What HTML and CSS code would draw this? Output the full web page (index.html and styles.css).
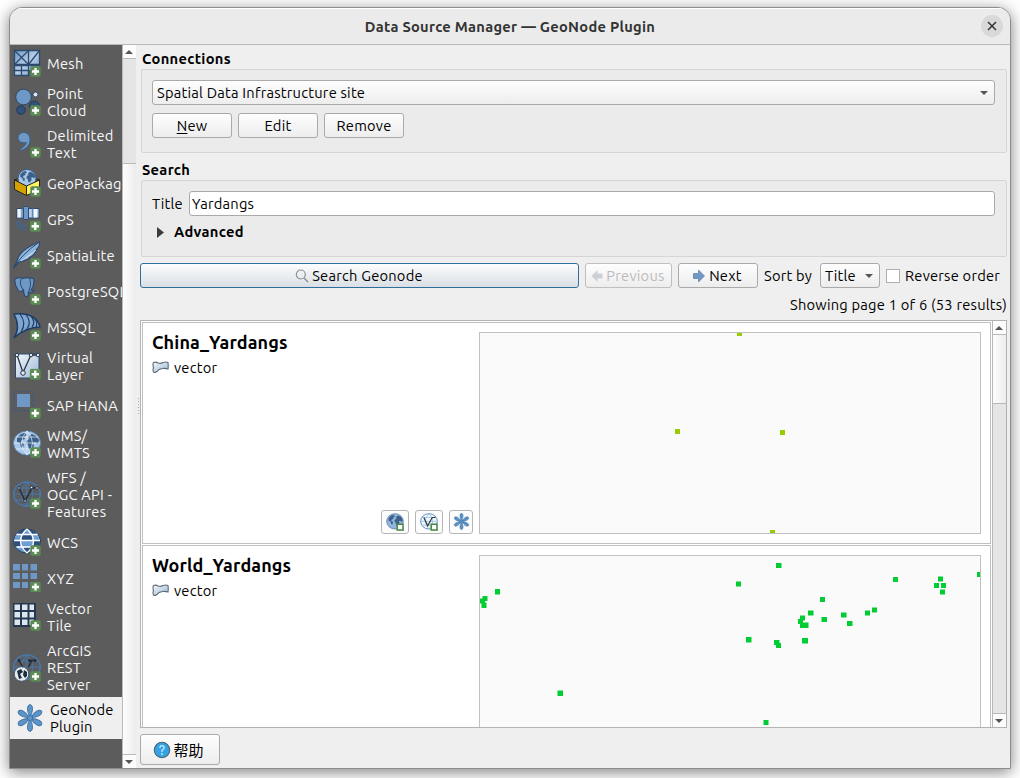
FILE: index.html
```
<!DOCTYPE html>
<html lang="en">
<head>
<meta charset="utf-8">
<title>Data Source Manager — GeoNode Plugin</title>
<link rel="stylesheet" href="styles.css">
</head>
<body>
<svg class="defs" width="0" height="0">
  <defs>
    <linearGradient id="pale" x1="0" y1="0" x2="1" y2="1"><stop offset="0" stop-color="#f4f6f9"/><stop offset="1" stop-color="#9db8d6"/></linearGradient>
    <linearGradient id="steel" x1="0" y1="0" x2="1" y2="1"><stop offset="0" stop-color="#6d97c4"/><stop offset=".5" stop-color="#b7cde6"/><stop offset="1" stop-color="#6d97c4"/></linearGradient>
    <symbol id="plus" viewBox="0 0 11 11"><rect x=".3" y=".3" width="10.4" height="10.4" rx="1.8" fill="#5a8c54"/><path d="M5.5 2v7M2 5.5h7" stroke="#fff" stroke-width="2.3"/></symbol>
    <symbol id="land" viewBox="0 0 28 28"><path d="M4 8l4-4 4-1 2 2-3 2 1 2-3 1-1 2 3 2-1 4-2-1-1-4-3-1zM16 6l3-2 4 2 3 4-1 4-3-2-2 1 1 3-3 4-2-1-1-4-2-2 1-3 3-1-2-1z" fill="#3c608a"/></symbol>
    <symbol id="flower" viewBox="0 0 28 28"><g fill="#5d94c8" stroke="#3c71a3" stroke-width=".9"><g id="pair"><path d="M14 13C10.500 7 10.700 1 14 .6 17.300 1 17.500 7 14 13zM14 15C10.500 21 10.700 27 14 27.400 17.300 27 17.500 21 14 15z"/></g><use href="#pair" transform="rotate(60 14 14)"/><use href="#pair" transform="rotate(120 14 14)"/><circle cx="14" cy="14" r="2.700"/></g></symbol>
    <symbol id="polygon" viewBox="0 0 18 14"><path d="M1.500 1.500Q4 .5 6 2Q9 3 11 1.500Q14 .5 16 1.500Q16.500 5 16 8Q13 7 10.500 7.500Q6.500 8 5 10.500Q3 12 1.500 11Q.5 9 1.500 7Q.5 3 1.500 1.500z" fill="url(#pale)" stroke="#5f6b78" stroke-width="1.100"/></symbol>
  </defs>
</svg>

<div class="window">
  <header class="titlebar">
    <h1 class="title">Data Source Manager — GeoNode Plugin</h1>
    <button class="close" aria-label="Close"><svg width="10" height="10" viewBox="0 0 10 10"><path d="M1 1l8 8M9 1L1 9" stroke="#333" stroke-width="1.500"/></svg></button>
  </header>

  <div class="body">
    <nav class="sources">
      <a class="source"><svg class="icon" viewBox="0 0 28 28"><g fill="url(#steel)" stroke="#2c4a70" stroke-width="1.300"><path d="M1.500 1.500h14v14h-14zM15.500 1.500h11v14h-11zM1.500 16.500h14v10h-14z"/><path d="M1.500 1.500l14 14M15.500 1.500l-14 14M26.500 1.500l-11 14M1.500 21.500h14M8.500 16.500v10" fill="none"/></g><path d="M15.500 16.500h11v5h-11z" fill="#7fa4cd" stroke="#2c4a70"/><use href="#plus" x="17" y="17" width="11" height="11"/></svg><span>Mesh</span></a>
      <a class="source"><svg class="icon" viewBox="0 0 28 28"><circle cx="10.500" cy="9" r="7.800" fill="#6f98c6" stroke="#2c4a70"/><circle cx="22.500" cy="6.500" r="2.500" fill="#dbe7f3" stroke="#2c4a70"/><circle cx="8" cy="22" r="4.300" fill="#31517b" stroke="#223b5c"/><circle cx="21.500" cy="18" r="5" fill="#31517b" stroke="#223b5c"/><use href="#plus" x="17" y="17" width="11" height="11"/></svg><span>Point<br>Cloud</span></a>
      <a class="source"><svg class="icon" viewBox="0 0 28 28"><path d="M10.500 2.500C14.500 2.500 17 5.500 17 9.500C17 15 13.500 19 7.500 20.500L7 19C10.500 17.500 13 15 13.300 12.500C9 13.500 5 11.500 5 7.800C5 4.800 7.500 2.500 10.500 2.500z" fill="#6f98c6" stroke="#35618f"/><use href="#plus" x="17" y="17" width="11" height="11"/></svg><span>Delimited<br>Text</span></a>
      <a class="source"><svg class="icon" viewBox="0 0 28 28"><path d="M1.500 11l12-5 13 5-13 6z" fill="#6b5300" stroke="#222"/><circle cx="14" cy="9.500" r="9" fill="#a9c8e8" stroke="#35618f"/><use href="#land" x="4" y="0" width="20" height="19"/><path d="M1.500 11l12 6v9.500l-12-6z" fill="#d4a300" stroke="#222"/><path d="M26.500 11l-13 6v9.500l13-6z" fill="#fff35e" stroke="#222"/><use href="#plus" x="17" y="17" width="11" height="11"/></svg><span>GeoPackage</span></a>
      <a class="source"><svg class="icon" viewBox="0 0 28 28"><path d="M4 3.500h22v9.500H4z" fill="#b9d0e8" stroke="#2c4a70"/><path d="M6 4v8.500M22.500 4v8.500" stroke="#f4f8fc" stroke-width="3"/><path d="M9 3.500v9.500M19.500 3.500v9.500" stroke="#5b87b5" stroke-width="1.300"/><rect x="10.500" y="1.500" width="5" height="13" rx="1" fill="#6f98c6" stroke="#2c4a70"/><path d="M3 15.500a9.500 9.500 0 0 0 10 9M6.500 15.500a6 6 0 0 0 7 5.500" fill="none" stroke="#3e6694" stroke-width="1.700"/><use href="#plus" x="16.500" y="15.500" width="11.500" height="11.500"/></svg><span>GPS</span></a>
      <a class="source"><svg class="icon" viewBox="0 0 28 28"><path d="M.5 27L4 20Q6 9 26.500 1Q27 6 23 9Q22 14 17 16Q13 20 6 21z" fill="#8db4da" stroke="#2c4a70" stroke-width="1.200"/><path d="M.5 27Q9 13 25 2" fill="none" stroke="#2c4a70"/><path d="M8 20l11-8M13 18l10-9" fill="none" stroke="#c5daee"/><use href="#plus" x="17" y="17" width="11" height="11"/></svg><span>SpatiaLite</span></a>
      <a class="source"><svg class="icon" viewBox="0 0 28 28"><path d="M2 2Q6-.5 10 1.500Q14 0 17 1.200Q21 .5 21 4Q21 9 18 13L21 13.500Q19.500 16 15.500 15L15 19Q12 21 11 17L10.500 13Q7 16 5 13Q1 7 2 2z" fill="#6f98c6" stroke="#2c4a70" stroke-width="1.200"/><path d="M8 2Q6 8 10.500 13M17 2Q19 8 15.500 15" fill="none" stroke="#2c4a70"/><use href="#plus" x="17" y="17" width="11" height="11"/></svg><span>PostgreSQL</span></a>
      <a class="source"><svg class="icon" viewBox="0 0 28 28"><path d="M1 1Q23-1 27 14Q13 14 1 25Q8 14 1 1z" fill="#7fa7d1" stroke="#1f3d63" stroke-width="1.400"/><path d="M7 1Q14 10 8 19M13 1.500Q19 9 14 16M18 3Q23 9 19 14M22 6Q25 10 23 14" fill="none" stroke="#1f3d63" stroke-width="1.200"/><use href="#plus" x="17" y="17" width="11" height="11"/></svg><span>MSSQL</span></a>
      <a class="source"><svg class="icon" viewBox="0 0 28 28"><path d="M2.500 2h23.500v24H2.500z" fill="url(#pale)" stroke="#2c4a70"/><path d="M4 3l6 17.500L18 3h6" fill="none" stroke="#26384d" stroke-width="1.300"/><g fill="#dfe8f1" stroke="#26384d"><circle cx="4" cy="3" r="1.800"/><circle cx="18" cy="3" r="1.800"/><circle cx="25" cy="3" r="1.800"/><circle cx="10" cy="21" r="2.300"/></g><use href="#plus" x="16.500" y="16.500" width="11.500" height="11.500"/></svg><span>Virtual<br>Layer</span></a>
      <a class="source"><svg class="icon" viewBox="0 0 28 28"><rect x="1" y=".5" width="19" height="19" fill="none" stroke="#3c5a80" stroke-width="1.500" stroke-dasharray="2.500 2"/><rect x="4" y="3" width="13" height="13" fill="#6f98c6"/><use href="#plus" x="16.500" y="16.500" width="11.500" height="11.500"/></svg><span>SAP HANA</span></a>
      <a class="source"><svg class="icon" viewBox="0 0 28 28"><ellipse cx="14" cy="13" rx="13.500" ry="12" fill="#a9c8e8" stroke="#5b87b5"/><use href="#land"/><path d="M14 1v24M1 13h26M3 7h22M3 19h22M14 1Q3 13 14 25M14 1Q25 13 14 25" fill="none" stroke="#eef5fb" stroke-width=".9" opacity=".75"/><use href="#plus" x="17" y="17" width="11" height="11"/></svg><span>WMS/<br>WMTS</span></a>
      <a class="source"><svg class="icon" viewBox="0 0 28 28"><path d="M14 1v24M1 13h26M3 7h22M3 19h22M14 1Q2 13 14 25M14 1Q26 13 14 25" fill="none" stroke="#4878ae"/><ellipse cx="14" cy="13" rx="13.300" ry="12" fill="none" stroke="#4878ae" stroke-width="1.500"/><path d="M6 7l6 13 7-13h5" fill="none" stroke="#222d3a" stroke-width="1.500"/><g fill="#fff" stroke="#222d3a"><circle cx="6" cy="7" r="1.300"/><circle cx="12" cy="20" r="1.300"/><circle cx="18.500" cy="6.500" r="1.300"/><circle cx="24" cy="7" r="1.300"/></g><use href="#plus" x="17" y="17" width="11" height="11"/></svg><span>WFS /<br>OGC API -<br>Features</span></a>
      <a class="source"><svg class="icon" viewBox="0 0 28 28"><ellipse cx="14" cy="13" rx="13.500" ry="12" fill="#6f9fd0" stroke="#1f3d63"/><path d="M4 6.500h4.500L12 1.500Q7 2 4 6.500zM24 6.500h-4.500L16 1.500Q21 2 24 6.500zM9 7h10v5.500H9zM1 13h6v5.500H2.500Q1 16 1 13zM27 13h-6v5.500h4.500Q27 16 27 13zM9 19.500h10L14 25z" fill="#2c4f7c"/><path d="M1 12.500h26M3.500 6.500h21M3.500 19h21M14 1Q1 13 14 25M14 1Q27 13 14 25" fill="none" stroke="#fff" stroke-width="1.300"/><use href="#plus" x="17" y="17" width="11" height="11"/></svg><span>WCS</span></a>
      <a class="source"><svg class="icon" viewBox="0 0 28 28"><path d="M0 0h7v6.500H0zM9 0h6v6.500H9zM17.500 0h6.500v6.500h-6.500zM0 9h7v6H0zM9 9h6v6H9zM17.500 9h6.500v6h-6.500zM0 18h7v6H0zM9 18h6v6H9zM17.500 18h6.500v6h-6.500z" fill="#6f98c6"/><use href="#plus" x="17" y="17.500" width="11" height="11"/></svg><span>XYZ</span></a>
      <a class="source"><svg class="icon" viewBox="0 0 28 28"><rect width="23" height="24" fill="#25384f"/><path d="M1.500 1.500H7V7H1.500zM9 1.500h5.500V7H9zM16.500 1.500H21V7h-4.500zM1.500 9H7v5.500H1.500zM9 9h5.500v5.500H9zM16.500 9H21v5.500h-4.500zM1.500 16.500H7V22H1.500zM9 16.500h5.500V22H9zM16.500 16.500H21V22h-4.500z" fill="#dbe6f1"/><use href="#plus" x="17" y="17" width="11" height="11"/></svg><span>Vector<br>Tile</span></a>
      <a class="source"><svg class="icon" viewBox="0 0 28 28"><path d="M14 1v24M1 13h26M3 7h22M3 19h22M14 1Q2 13 14 25M14 1Q26 13 14 25" fill="none" stroke="#4878ae"/><ellipse cx="14" cy="13" rx="13.300" ry="12" fill="none" stroke="#4878ae" stroke-width="1.500"/><path d="M6 6.500l4 7M19 6.500l-4 7M16 6.500h7" fill="none" stroke="#222d3a" stroke-width="1.500"/><g fill="#222d3a"><circle cx="6" cy="6.500" r="1.500"/><circle cx="16.500" cy="6.500" r="1.500"/><circle cx="22" cy="6.500" r="1.500"/></g><circle cx="8.500" cy="20" r="7.300" fill="#e6ebf0" stroke="#46566a"/><path d="M4 17l4-2 2 3-3 2 2 4-3 1zM11 16l3 2v4l-2 2-2-3z" fill="#1d2c3d"/><use href="#plus" x="17" y="17" width="11" height="11"/></svg><span>ArcGIS<br>REST<br>Server</span></a>
      <a class="source selected"><svg class="icon"><use href="#flower"/></svg><span>GeoNode<br>Plugin</span></a>
    </nav>

    <div class="scroll side-scroll"><i class="btn-end"><b class="up"></b></i><i class="track"></i><i class="handle"></i><i class="btn-end"><b class="down"></b></i></div>
    <div class="splitter"><i></i></div>

    <main class="main">
      <h2 class="heading">Connections</h2>
      <section class="group connections">
        <div class="box combo"><span>Spatial Data Infrastructure site</span><b class="down"></b></div>
        <div class="row">
          <button class="box button"><span><u>N</u>ew</span></button>
          <button class="box button"><span>Edit</span></button>
          <button class="box button"><span>Remove</span></button>
        </div>
      </section>

      <h2 class="heading search-heading">Search</h2>
      <section class="group search">
        <div class="field"><span class="field-name">Title</span><div class="box input"><span>Yardangs</span></div></div>
        <div class="advanced"><i></i><span>Advanced</span></div>
      </section>

      <div class="toolbar">
        <button class="box primary"><svg width="14" height="14" viewBox="0 0 14 14"><circle cx="5.800" cy="5.500" r="4.500" fill="none" stroke="#8b8f92" stroke-width="1.200"/><path d="M9 9l4 4" stroke="#8b8f92" stroke-width="1.500"/></svg><span>Search Geonode</span></button>
        <button class="box prev"><svg width="12" height="14" viewBox="0 0 12 14"><path d="M.5 7L6.500 1v3.500h5v5h-5V13z" fill="#cdd1d5"/></svg><span>Previous</span></button>
        <button class="box next"><svg width="12" height="14" viewBox="0 0 12 14"><path d="M11.500 7L5.500 1v3.500h-5v5h5V13z" fill="#6f98c6" stroke="#5c7fa8" stroke-width=".7"/></svg><span>Next</span></button>
        <span class="sort">Sort by</span>
        <div class="box sort-combo"><span>Title</span><b class="down"></b></div>
        <label class="reverse"><i></i><span>Reverse order</span></label>
      </div>
      <p class="status">Showing page 1 of 6 (53 results)</p>

      <div class="results">
        <div class="cards">
          <article class="card">
            <div class="info">
              <h3>China_Yardangs</h3>
              <div class="kind"><svg width="18" height="14"><use href="#polygon"/></svg><span>vector</span></div>
              <div class="actions">
                <button class="box"><svg width="18" height="18" viewBox="0 0 28 28"><ellipse cx="14" cy="13" rx="13" ry="12" fill="#91b5db" stroke="#406a97"/><use href="#land"/><rect x="17.500" y="17.500" width="9" height="9" fill="#fff" stroke="#4d8a47" stroke-width="2.500"/></svg></button>
                <button class="box"><svg width="18" height="18" viewBox="0 0 28 28"><ellipse cx="14" cy="13" rx="13" ry="12" fill="#f3f8fd" stroke="#5f8ec2" stroke-width="1.500"/><path d="M1 13h26M3 7h22M3 19h22M14 1Q2 13 14 25M14 1Q26 13 14 25" fill="none" stroke="#8eb1d8"/><path d="M6 7l6 13 7-13h5" fill="none" stroke="#26384d" stroke-width="1.800"/><rect x="17.500" y="17.500" width="9" height="9" fill="#fff" stroke="#4d8a47" stroke-width="2.500"/></svg></button>
                <button class="box small"><svg width="17" height="17"><use href="#flower"/></svg></button>
              </div>
            </div>
            <svg class="map" viewBox="480 333 500 200"><g fill="#9c0"><path d="M737 331h5v5h-5zM675 429h5v5h-5zM780 430h5v5h-5zM770 530h5v5h-5z"/></g></svg>
          </article>
          <article class="card">
            <div class="info">
              <h3>World_Yardangs</h3>
              <div class="kind"><svg width="18" height="14"><use href="#polygon"/></svg><span>vector</span></div>
            </div>
            <svg class="map" viewBox="480 556 500 200"><path fill="#00cc33" d="M776 563h5.500v5h-5.500zM736 581.500h5v5h-5zM820 597h5v5h-5zM808 610.500h5.500v5h-5.500zM800 615.500h5v5h-5zM798 619h5v5h-5zM800 622.500h8.500v5.500h-8.500zM821.500 617h5.500v5h-5.500zM841 612.500h5.500v5h-5.500zM847 621h5.500v5h-5.500zM865 610.500h5v5h-5zM872 607.500h5v5h-5zM893 577h5v5h-5zM938 576.500h5v5h-5zM934 583h5v5h-5zM941 583h5v5h-5zM940 589.500h5v5h-5zM977 572h5v5h-5zM746 637h5.500v5.500h-5.500zM774 640h5.500v5h-5.500zM776 643h5v5h-5zM802 638h6v5.500h-6zM763.500 720h5v5h-5zM557.500 690.500h5.500v5.500h-5.500zM495 589h5v5.500h-5zM482.500 596h5v5h-5zM480 598.500h5v5h-5zM481.500 602.500h5v5.500h-5z"/></svg>
          </article>
        </div>
        <div class="scroll list-scroll"><i class="btn-end"><b class="up"></b></i><i class="handle"></i><i class="track"></i><i class="btn-end"><b class="down"></b></i></div>
      </div>

      <button class="box help"><svg width="18" height="18" viewBox="0 0 18 18"><circle cx="9" cy="9" r="7.700" fill="#35a3e3" stroke="#4b6472" stroke-width="1.100"/><path d="M6.800 7Q7 4.700 9 4.700T11.200 6.800Q11.200 8 9 9.300V11" fill="none" stroke="#c9ecff" stroke-width="1.300"/><circle cx="9" cy="13" r=".9" fill="#c9ecff"/></svg><span>帮助</span></button>
    </main>
  </div>
</div>
</body>
</html>
```
FILE: styles.css
```
* { box-sizing: border-box; margin: 0; }
html, body { width: 1020px; height: 778px; overflow: hidden; background: #fff; }
body { padding: 7px 9px; font: 14.67px/17px "Ubuntu", "Noto Sans", "Noto Sans CJK SC", sans-serif; letter-spacing: .23px; color: #000; }
.defs { position: absolute; }
i, b { display: block; font-style: normal; }
button { font: inherit; color: inherit; letter-spacing: inherit; }

.window { width: 1002px; height: 762px; border: 1px solid #8d8d8d; border-radius: 13px 13px 0 0; background: #efefef; box-shadow: 0 3px 15px rgba(0,0,0,.5); overflow: hidden; }
.titlebar { height: 37px; background: #ebebeb; border-bottom: 1px solid #b9b9b9; box-shadow: inset 0 1px #fff; display: grid; grid-template-columns: 29px 1fr 29px; align-items: center; }
.title { grid-column: 2; text-align: center; font-size: 14.67px; line-height: 20px; color: #333; padding-top: 2px; letter-spacing: .28px; }
.close { width: 22px; height: 22px; padding: 0; border: 0; border-radius: 50%; background: #d9d9d9; display: grid; place-items: center; }

.body { display: flex; height: 723px; }
.sources { width: 112px; background: #5c5c5c; color: #f7f7f7; overflow: hidden; }
.source { display: flex; align-items: center; gap: 6px; padding: 0 0 0 3px; min-height: 36px; white-space: nowrap; }
.source span { padding: 4px 0; }
.icon { width: 28px; height: 28px; flex: none; }
.selected { background: #efefef; color: #000; padding-left: 6px; }

.scroll { display: flex; flex-direction: column; }
.btn-end { height: 13px; flex: none; display: grid; place-items: center; background: #fcfcfc; }
.up, .down { width: 0; height: 0; border: 4px solid transparent; }
.up { border-top: 0; border-bottom-color: #555; }
.down { border-bottom: 0; border-top-color: #555; }
.track { background: #e5e5e5; }
.handle { background: linear-gradient(90deg, #fdfdfd, #ececec); }
.side-scroll { width: 14px; border-left: 1px solid #b9b9b9; }
.side-scroll .btn-end { padding-right: 1px; }
.side-scroll .track { height: 106px; border: solid #b9b9b9; border-width: 1px 0; }
.side-scroll .handle { flex: 1; border-bottom: 1px solid #b9b9b9; }
.splitter { width: 4px; display: flex; align-items: center; justify-content: center; }
.splitter i { width: 1px; height: 17px; background: repeating-linear-gradient(#aaa 0 1px, transparent 1px 3px); }

.main { width: 867px; display: flex; flex-direction: column; }
.heading { font-size: 14.67px; line-height: 17px; margin: 5px 0 2px 2px; letter-spacing: .3px; }
.group { border: 1px solid #d5d5d5; border-radius: 2px; background: #ebebeb; margin-left: 1px; }
.connections { height: 84px; padding: 10px 11px 0 10px; }
.box { height: 25px; border: 1px solid #aaa; border-radius: 3px; background: linear-gradient(#fefefe, #ededed); display: flex; align-items: center; justify-content: center; padding: 0; white-space: nowrap; }
.combo { justify-content: space-between; padding: 0 6px 0 4px; }
.row { display: flex; gap: 6px; margin-top: 8px; }
.button { width: 80px; }
u { text-underline-offset: 2px; }
.search-heading { margin-top: 8px; }
.search { height: 77px; padding: 10px 11px 0 10px; }
.field { display: flex; align-items: center; gap: 6px; }
.field-name { width: 31px; }
.input { flex: 1; background: #fff; justify-content: flex-start; padding-left: 2px; }
.advanced { display: flex; align-items: center; gap: 10px; margin: 7px 0 0 5px; font-weight: bold; letter-spacing: .3px; }
.advanced i { width: 7px; height: 11px; background: #3c3c3c; clip-path: polygon(0 0, 100% 50%, 0 100%); }
.advanced span { padding-bottom: 2px; }

.toolbar { display: flex; align-items: center; margin-top: 6px; }
.primary { width: 439px; gap: 3px; border-color: #2f6f9c; background: linear-gradient(#fcfdfd, #d9dfe5); margin-right: 6px; padding-right: 1px; }
.prev { width: 87px; gap: 3px; color: #bcbcbc; border-color: #bfbfbf; margin-right: 6px; padding-right: 1px; }
.next { width: 80px; gap: 4px; margin-right: 6px; padding-right: 1px; }
.sort { width: 56px; white-space: nowrap; }
.sort-combo { width: 60px; justify-content: space-between; padding: 0 6px 0 4px; }
.reverse { display: flex; align-items: center; gap: 5px; margin-left: 6px; white-space: nowrap; }
.reverse i { width: 14px; height: 14px; border: 1px solid #b0b0b0; background: #fff; }
.status { text-align: right; margin-top: 8px; height: 24px; }

.results { height: 408px; border: 1px solid #b3b3b3; background: #fff; display: flex; overflow: hidden; }
.cards { width: 851px; padding: 1px; flex: none; display: flex; flex-direction: column; gap: 1px; overflow: hidden; }
.card { height: 222px; flex: none; border: 1px solid #c0c0c0; display: flex; justify-content: space-between; padding: 9px 9px 0; }
.map { width: 502px; height: 202px; flex: none; border: 1px solid #c0c0c0; background: #fafafa; }
.info { width: 321px; height: 202px; display: flex; flex-direction: column; }
h3 { font-size: 18px; line-height: 20px; letter-spacing: .12px; }
.kind { display: flex; align-items: center; gap: 4px; margin-top: 7px; }
.actions { display: flex; justify-content: flex-end; gap: 6px; margin-top: auto; }
.actions .box { width: 28px; height: 24px; background: #fdfdfd; border-color: #b5b5b5; }
.actions .small { width: 24px; }
.actions svg { margin-bottom: 1px; }
.list-scroll { width: 14px; border-left: 1px solid #b9b9b9; }
.list-scroll .btn-end { padding-right: 1px; }
.list-scroll .handle { height: 70px; border: solid #b9b9b9; border-width: 1px 0; }
.list-scroll .track { flex: 1; border-bottom: 1px solid #b9b9b9; }
.help { width: 80px; height: 31px; margin-top: 6px; gap: 2px; font-size: 15px; letter-spacing: 0; padding-right: 3px; }
.help span { padding-top: 1px; }
```
